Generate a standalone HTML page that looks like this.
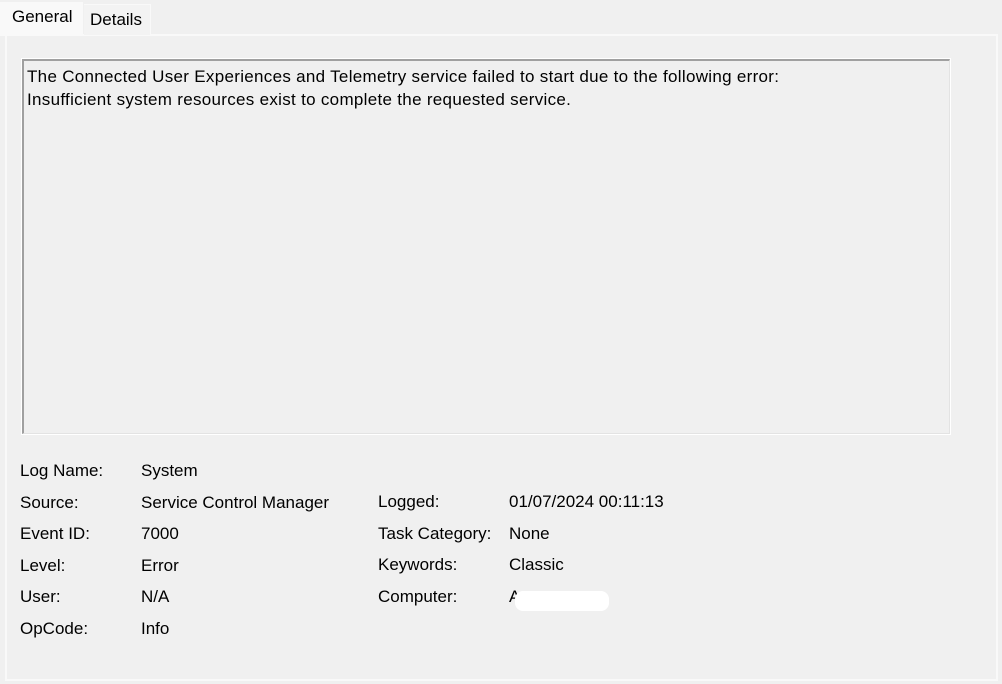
<!DOCTYPE html>
<html><head><style>
body{margin:0;width:1002px;height:684px;background:#f0f0f0;font-family:"Liberation Sans",sans-serif;font-size:15px;color:#000;position:relative;overflow:hidden}
.a{position:absolute;white-space:nowrap}
</style></head><body>
<div class="a" style="left:5px;top:34px;width:989px;height:643px;border:2px solid #f9f9f9;background:#f0f0f0"></div>
<div class="a" style="left:0;top:2px;width:83px;height:34px;background:#f9f9f9"></div>
<div class="a" style="left:12px;top:7px;font-size:17px">General</div>
<div class="a" style="left:84px;top:4px;width:66px;height:30px;background:#f3f3f3;border-top:1px solid #f9f9f9;border-right:1px solid #f9f9f9"></div>
<div class="a" style="left:90px;top:10px;font-size:17px">Details</div>
<div class="a" style="left:22px;top:59px;width:925px;height:372px;border-top:2px solid #a0a0a0;border-left:2px solid #a0a0a0;border-right:1px solid #e3e3e3;border-bottom:1px solid #e3e3e3;outline:1px solid #fff;outline-offset:0"></div>
<div class="a" style="left:27px;top:65px;font-size:17px;line-height:23px;letter-spacing:0.3px">The Connected User Experiences and Telemetry service failed to start due to the following error:<br>Insufficient system resources exist to complete the requested service.</div>
<div class="a" style="left:20px;top:455px;line-height:31.6px;font-size:17px">Log Name:<br>Source:<br>Event ID:<br>Level:<br>User:<br>OpCode:</div>
<div class="a" style="left:141px;top:455px;line-height:31.6px;font-size:17px">System<br>Service Control Manager<br>7000<br>Error<br>N/A<br>Info</div>
<div class="a" style="left:378px;top:486px;line-height:31.6px;font-size:17px">Logged:<br>Task Category:<br>Keywords:<br>Computer:</div>
<div class="a" style="left:509px;top:486px;line-height:31.6px;font-size:17px">01/07/2024 00:11:13<br>None<br>Classic<br>A</div>
<div class="a" style="left:515px;top:591px;width:94px;height:20px;background:#fff;border-radius:8px"></div>
</body></html>
